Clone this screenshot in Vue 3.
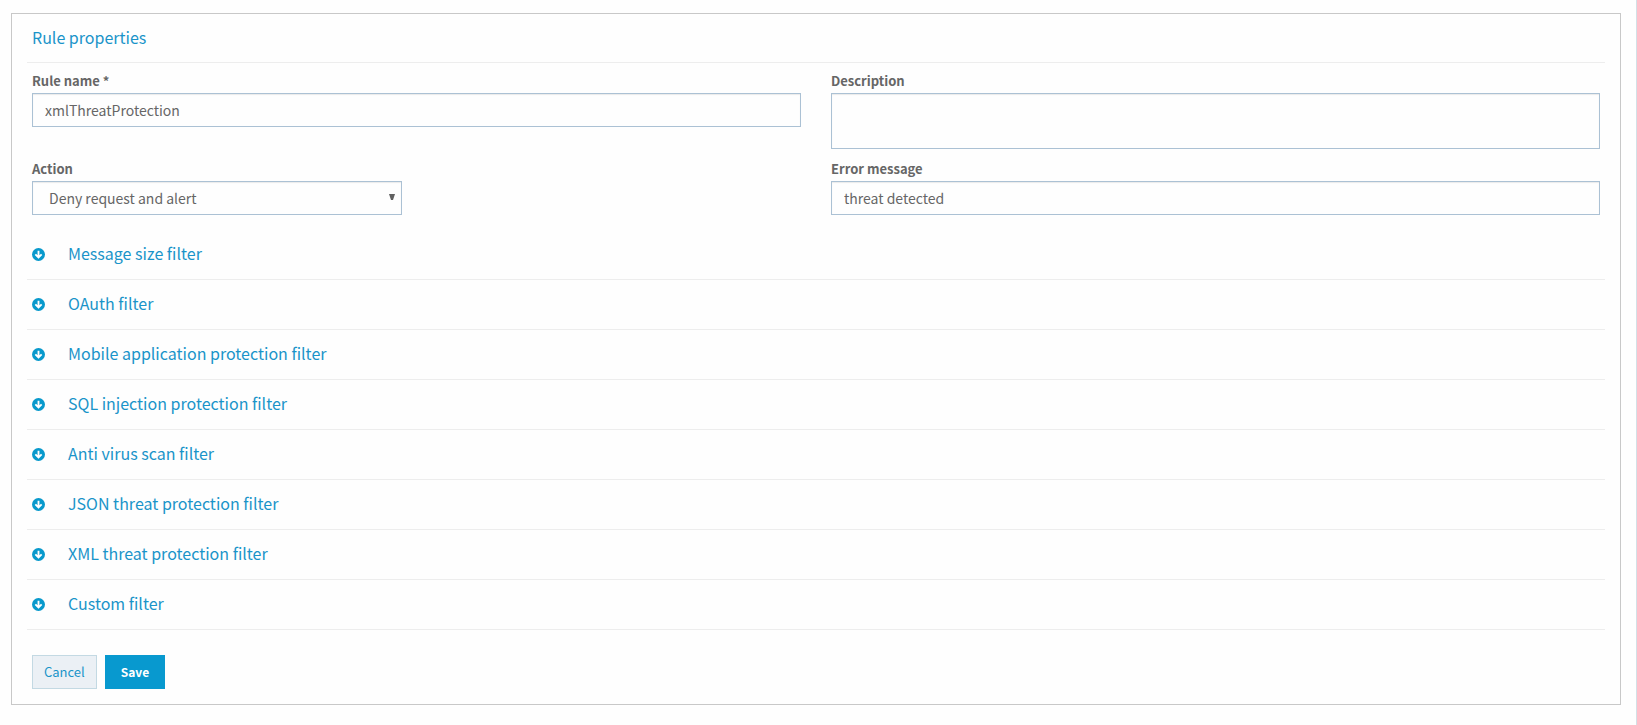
<script setup>
import { ref, reactive } from 'vue'

const rule = reactive({
  name: 'xmlThreatProtection',
  description: '',
  action: 'Deny request and alert',
  error: 'threat detected',
})

const filters = ref([
  'Message size filter',
  'OAuth filter',
  'Mobile application protection filter',
  'SQL injection protection filter',
  'Anti virus scan filter',
  'JSON threat protection filter',
  'XML threat protection filter',
  'Custom filter',
])
</script>

<template>
  <main class="page">
    <form class="panel" @submit.prevent>
      <h2 class="title">Rule properties</h2>

      <div class="fields">
        <div class="field">
          <label for="rule-name">Rule name *</label>
          <input id="rule-name" v-model="rule.name" class="control" type="text" />
        </div>
        <div class="field">
          <label for="description">Description</label>
          <textarea id="description" v-model="rule.description" class="control area"></textarea>
        </div>
        <div class="field">
          <label for="action">Action</label>
          <div class="select-wrap">
            <select id="action" v-model="rule.action" class="control select">
              <option>Deny request and alert</option>
            </select>
            <svg class="caret" viewBox="0 0 6 6" aria-hidden="true">
              <path d="M0 0h6L4 6H2z" />
            </svg>
          </div>
        </div>
        <div class="field">
          <label for="error">Error message</label>
          <input id="error" v-model="rule.error" class="control" type="text" />
        </div>
      </div>

      <ul class="filters">
        <li v-for="name in filters" :key="name">
          <button type="button" class="filter">
            <svg class="arrow" viewBox="0 0 14 14" aria-hidden="true">
              <circle cx="7" cy="7" r="7" />
              <path d="M7 3v7M3.6 6.8L7 10.2l3.4-3.4" />
            </svg>
            <span>{{ name }}</span>
          </button>
        </li>
      </ul>

      <div class="actions">
        <button type="button" class="btn cancel">Cancel</button>
        <button type="submit" class="btn save">Save</button>
      </div>
    </form>
  </main>
</template>

<style>
body {
  background: #fefefe;
}
</style>

<style scoped>
.page,
.page * {
  box-sizing: border-box;
}
.page {
  min-height: 100vh;
  padding: 13px 15px 20px 11px;
  border-right: 1px solid #d3e0e6;
  color: #666;
  font: 14px/22px "Noto Sans CJK SC", "Open Sans", sans-serif;
}
.panel {
  padding: 0 15px 15px;
  border: 1px solid #c8c8c8;
}
.title {
  margin: 0;
  padding: 0 5px 2px;
  border-bottom: 1px solid #ededed;
  color: #1a94c9;
  font-size: 16px;
  font-weight: 400;
  line-height: 46px;
}
.fields {
  display: grid;
  grid-template-columns: 1fr 1fr;
  gap: 9px 30px;
  padding: 7px 5px 15px;
}
.field label {
  display: block;
  padding-bottom: 1px;
  font-size: 13px;
  font-weight: 700;
}
.control {
  display: block;
  width: 100%;
  height: 34px;
  margin: 0;
  padding: 0 12px;
  border: 1px solid #abc1d4;
  border-radius: 0;
  outline: none;
  background: #fefefe;
  box-shadow: inset 0 1px 1px rgba(0, 0, 0, 0.08);
  color: #666;
  font: inherit;
}
.area {
  height: 56px;
  padding: 6px 12px;
  resize: none;
}
.select-wrap {
  position: relative;
  width: calc(50% - 15px);
}
.select {
  padding: 0 16px;
  appearance: none;
}
.caret {
  position: absolute;
  top: 13px;
  right: 7px;
  width: 6px;
  height: 6px;
  fill: #606060;
  pointer-events: none;
}
.filters {
  margin: 0;
  padding: 0;
  list-style: none;
}
.filters li {
  border-bottom: 1px solid #ededed;
}
.filter {
  display: flex;
  align-items: center;
  gap: 23px;
  width: 100%;
  height: 49px;
  padding: 0 5px;
  border: 0;
  background: none;
  color: #1a94c9;
  font: inherit;
  font-size: 16px;
  text-align: left;
  cursor: pointer;
}
.filter span {
  padding-bottom: 3px;
}
.arrow {
  width: 13px;
  height: 13px;
  fill: #0899cc;
}
.arrow path {
  fill: none;
  stroke: #fff;
  stroke-width: 2;
}
.actions {
  display: flex;
  gap: 8px;
  padding: 25px 5px 0;
}
.btn {
  height: 34px;
  padding: 0 11px;
  border: 1px solid #c3d9e3;
  background: #ebf0f5;
  color: #1a94c9;
  font: inherit;
  font-size: 13px;
  cursor: pointer;
}
.save {
  padding: 0 15px;
  border-color: #0899cf;
  background: #0899cf;
  color: #fff;
  font-size: 12px;
  font-weight: 700;
}
</style>
